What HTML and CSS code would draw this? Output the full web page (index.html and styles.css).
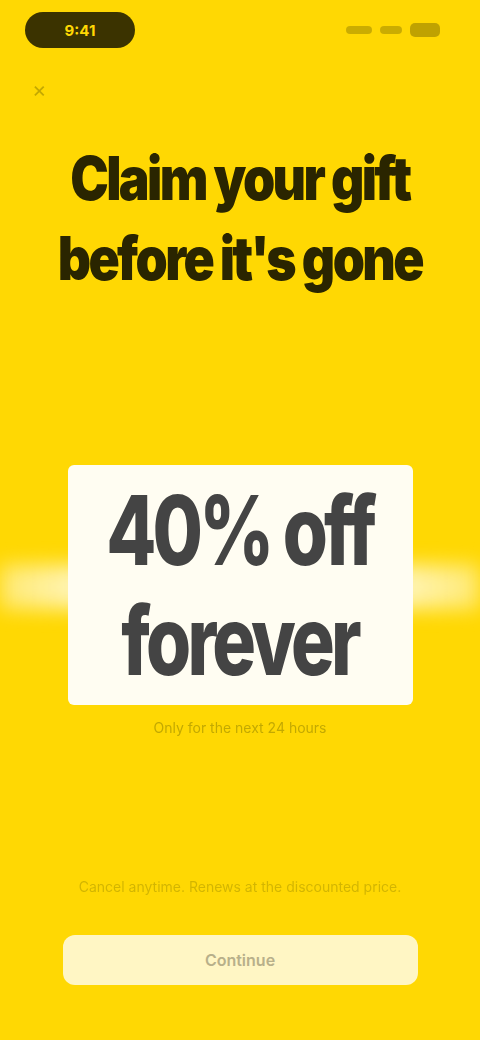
FILE: index.html
```html
<!DOCTYPE html>
<html lang="en">
<head>
<meta charset="utf-8">
<title>Offer</title>
<link rel="stylesheet" href="styles.css">
</head>
<body>
<div class="screen">
  <div class="status">
    <div class="pill">9:41</div>
    <div class="icons">
      <span class="sig"></span>
      <span class="wifi"></span>
      <span class="batt"></span>
    </div>
  </div>
  <div class="nav">
    <span class="close">×</span>
  </div>
  <h1 class="headline">Claim your gift<br>before it's gone</h1>
  <div class="offer">
    <div class="band"></div>
    <div class="card">
      <div class="big">40% off</div>
      <div class="big">forever</div>
    </div>
  </div>
  <p class="caption">Only for the next 24 hours</p>
  <div class="spacer"></div>
  <p class="terms">Cancel anytime. Renews at the discounted price.</p>
  <button class="cta">Continue</button>
</div>
</body>
</html>
```
FILE: styles.css
```css
* { box-sizing: border-box; }
html, body { margin: 0; padding: 0; }
body {
  background: #ffd803;
  font-family: Inter, "Liberation Sans", sans-serif;
  color: #111;
}
.screen {
  width: 480px;
  height: 1040px;
  display: flex;
  flex-direction: column;
  align-items: center;
  overflow: hidden;
}
.status {
  width: 100%;
  height: 60px;
  display: flex;
  justify-content: space-between;
  align-items: center;
  padding: 0 40px 0 25px;
}
.pill {
  width: 110px;
  height: 36px;
  border-radius: 18px;
  background: #3b3300;
  color: #ffd803;
  font-weight: 700;
  font-size: 15px;
  display: flex;
  align-items: center;
  justify-content: center;
}
.icons { display: flex; gap: 8px; align-items: center; opacity: 0.35; }
.sig { width: 26px; height: 8px; background: #6b5d00; border-radius: 4px; }
.wifi { width: 22px; height: 8px; background: #6b5d00; border-radius: 4px; }
.batt { width: 30px; height: 14px; background: #4a4000; border-radius: 5px; }
.nav {
  width: 100%;
  height: 60px;
  padding: 18px 32px 0;
}
.close { font-size: 22px; color: #8a7a00; opacity: 0.5; line-height: 1; }
.headline {
  margin: 18px 0 0;
  font-family: Inter, "Liberation Sans", sans-serif;
  font-weight: 900;
  font-size: 60px;
  line-height: 80px;
  letter-spacing: -3px;
  text-align: center;
  color: #2a2500;
  transform: scaleX(0.86);
}
.offer {
  position: relative;
  margin-top: 167px;
  width: 100%;
  display: flex;
  justify-content: center;
}
.band {
  position: absolute;
  left: 0;
  right: 0;
  top: 100px;
  height: 44px;
  background: linear-gradient(90deg, rgba(255,250,220,0.5), rgba(255,250,220,0.9) 20%, rgba(255,250,220,0.9) 80%, rgba(255,250,220,0.5));
  filter: blur(10px);
}
.card {
  position: relative;
  width: 345px;
  height: 240px;
  background: #fffdf2;
  border-radius: 6px;
  display: flex;
  flex-direction: column;
  align-items: center;
  justify-content: center;
  gap: 4px;
}
.big {
  font-family: Inter, "Liberation Sans", sans-serif;
  font-weight: 800;
  font-size: 96px;
  line-height: 106px;
  letter-spacing: -5px;
  color: #444;
  white-space: nowrap;
  transform: scaleX(0.76);
}
.caption {
  margin: 14px 0 0;
  font-size: 14px;
  color: #9c8a00;
  opacity: 0.6;
}
.spacer { flex: 1; }
.terms {
  margin: 0 0 40px;
  width: 380px;
  text-align: center;
  font-size: 14px;
  color: #b09a00;
  opacity: 0.55;
}
.cta {
  width: 355px;
  height: 50px;
  margin-bottom: 55px;
  border: none;
  border-radius: 12px;
  background: #fff6c4;
  font-family: Inter, "Liberation Sans", sans-serif;
  font-size: 16px;
  font-weight: 600;
  color: #b8b08a;
}
```
